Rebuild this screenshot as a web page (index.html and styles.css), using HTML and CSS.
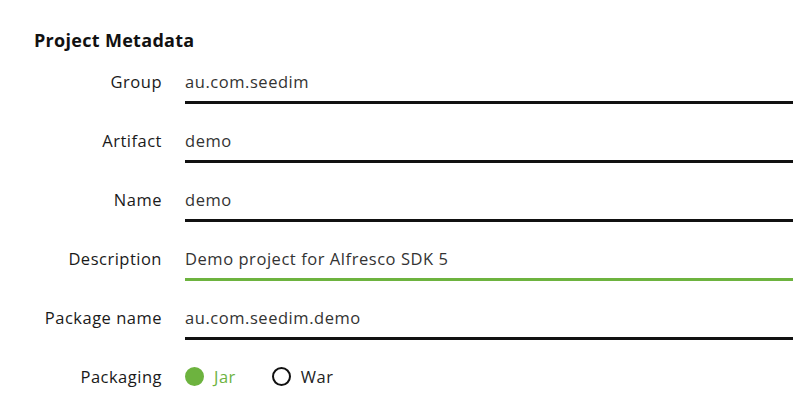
FILE: index.html
```html
<!DOCTYPE html>
<html lang="en">
<head>
  <meta charset="UTF-8" />
  <title>Project Metadata</title>
  <link rel="stylesheet" href="styles.css">
</head>
<body>
  <section class="metadata">
    <h2>Project Metadata</h2>

    <div class="row">
      <label for="group">Group</label>
      <input type="text" id="group" value="au.com.seedim">
    </div>

    <div class="row">
      <label for="artifact">Artifact</label>
      <input type="text" id="artifact" value="demo">
    </div>

    <div class="row">
      <label for="name">Name</label>
      <input type="text" id="name" value="demo">
    </div>

    <div class="row">
      <label for="description">Description</label>
      <input type="text" id="description" class="focused" value="Demo project for Alfresco SDK 5">
    </div>

    <div class="row">
      <label for="packageName">Package name</label>
      <input type="text" id="packageName" value="au.com.seedim.demo">
    </div>

    <div class="row">
      <span class="row-label">Packaging</span>
      <div class="radios">
        <span class="radio checked"><span class="dot"></span>Jar</span>
        <span class="radio"><span class="dot"></span>War</span>
      </div>
    </div>
  </section>
</body>
</html>
```

FILE: styles.css
```css
body {
  font-family: "Open Sans", sans-serif;
  background-color: #fff;
  color: #222;
  margin: 0;
}

.metadata {
  padding: 28px 7px 0 34px;
}

h2 {
  margin: 0 0 10px;
  font-size: 18px;
  line-height: 24px;
  font-weight: 700;
  letter-spacing: 0.3px;
  color: #111;
}

.row {
  display: grid;
  grid-template-columns: 128px 1fr;
  column-gap: 23px;
  height: 42px;
  margin-bottom: 17px;
}

label, .row-label {
  text-align: right;
  font-size: 16.5px;
  font-weight: 500;
  letter-spacing: 0.5px;
  align-self: center;
  padding-bottom: 3px;
  color: #1a1a1a;
}

input {
  font-family: inherit;
  font-size: 16.5px;
  letter-spacing: 0.55px;
  color: #333;
  border: none;
  border-bottom: 3px solid #111;
  padding: 0;
  height: 42px;
  box-sizing: border-box;
  outline: none;
  background: transparent;
}

input.focused {
  border-bottom-color: #6db33f;
}

.radios {
  display: flex;
  align-items: center;
  gap: 36px;
  padding-bottom: 3px;
  font-size: 16.5px;
  letter-spacing: 0.5px;
}

.radio {
  display: flex;
  align-items: center;
  gap: 10px;
  color: #222;
}

.dot {
  width: 15px;
  height: 15px;
  border: 2px solid #111;
  border-radius: 50%;
}

.radio.checked {
  color: #6db33f;
}

.radio.checked .dot {
  background: #6db33f;
  border-color: #6db33f;
}
```
